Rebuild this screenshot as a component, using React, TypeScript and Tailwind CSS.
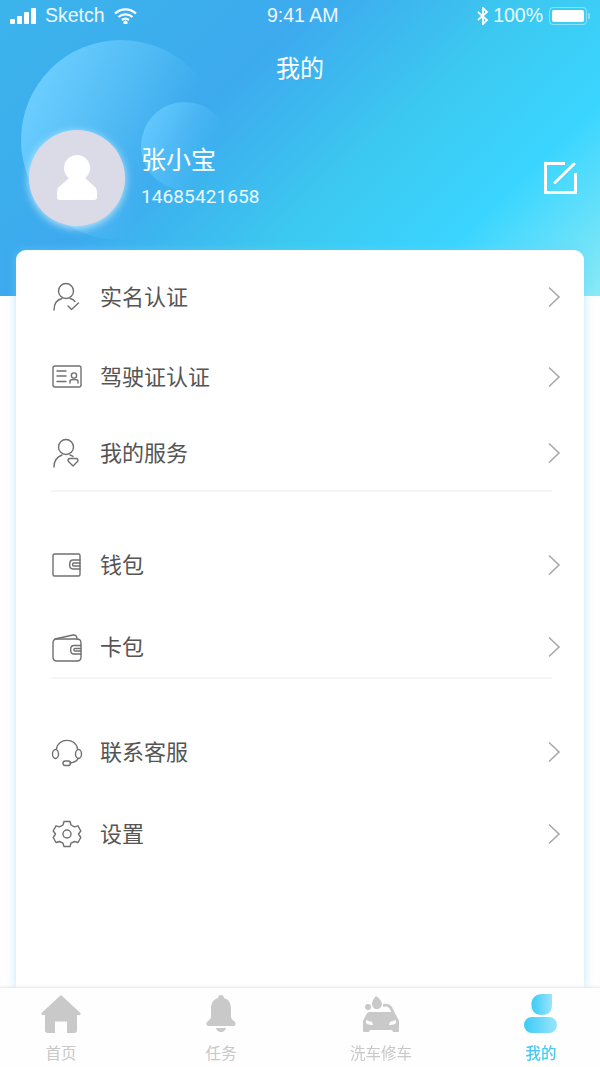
import React from 'react';

const Chevron = () => (
  <svg width="14" height="22" viewBox="0 0 14 22" fill="none" stroke="#a9a9a9" strokeWidth="1.6">
    <path d="M2 1.5 L12 11 L2 20.5" />
  </svg>
);

const iconProps = {
  width: 32,
  height: 32,
  viewBox: '0 0 32 32',
  fill: 'none',
  stroke: '#707070',
  strokeWidth: 1.4,
  strokeLinecap: 'round' as const,
  strokeLinejoin: 'round' as const,
};

const IdentityIcon = () => (
  <svg {...iconProps}>
    <circle cx="15" cy="10" r="7.500" />
    <path d="M3 29 C3 22 7 18.500 11 17.500" />
    <path d="M19 17.500 C21 18 23 19 24 20.500" />
    <path d="M17 25 L20.500 28.500 L27.500 22" />
  </svg>
);

const LicenseIcon = () => (
  <svg {...iconProps}>
    <rect x="2" y="5" width="28" height="21" rx="2" />
    <path d="M6 10 H15 M6 15 H15 M6 20.500 H15" />
    <circle cx="23" cy="14.500" r="2.600" />
    <path d="M19 22 V20 C19 18 27 18 27 20 V22" />
  </svg>
);

const ServiceIcon = () => (
  <svg {...iconProps}>
    <circle cx="15" cy="10" r="7.500" />
    <path d="M3 30 C3 23 7 19.500 11 18" />
    <path d="M19 18 C20 18.400 21 19 22 19.500" />
    <path d="M22 29 L17.500 24.500 C16.500 23 17 21.500 19 21.500 H25 C27 21.500 27.500 23 26.500 24.500 Z" />
  </svg>
);

const WalletIcon = () => (
  <svg {...iconProps}>
    <rect x="2" y="5" width="27" height="22" rx="1.500" />
    <path d="M29 11 H22 C17.500 11 17.500 20 22 20 H29" />
    <path d="M29 14 H23 C21 14 21 17 23 17 H29" />
  </svg>
);

const CardIcon = () => (
  <svg {...iconProps}>
    <path d="M2 12 C2 9.500 3.500 8 6 8 H26 C28.500 8 30 9.500 30 12 V26 C30 28.500 28.500 30 26 30 H6 C3.500 30 2 28.500 2 26 Z" />
    <path d="M4 8 L22 4 C24.500 3.600 26 5 26 8" />
    <path d="M30 14.500 H23 C18.500 14.500 18.500 23 23 23 H30" />
    <path d="M30 17.500 H24 C22.500 17.500 22.500 20 24 20 H30" />
  </svg>
);

const SupportIcon = () => (
  <svg {...iconProps}>
    <path d="M5.500 13 C7 1.500 25 1.500 26.500 13" />
    <ellipse cx="4.500" cy="18" rx="3" ry="4.500" />
    <ellipse cx="27.500" cy="18" rx="3" ry="4.500" />
    <path d="M27 22.500 C26 25.500 23 26.500 19 27" />
    <rect x="12" y="25" width="7.500" height="4.500" rx="2.200" />
  </svg>
);

const SettingsIcon = () => (
  <svg {...iconProps}>
    <path d="M13 3.500 H19 L20 7 L23.500 8.800 L27 7.800 L29.800 13 L27.500 16 L29.800 19.500 L27 24.500 L23.500 23.500 L20 25.200 L19 28.500 H13 L12 25.200 L8.500 23.500 L5 24.500 L2.200 19.500 L4.500 16 L2.200 13 L5 7.800 L8.500 8.800 L12 7 Z" />
    <circle cx="16" cy="16" r="4" />
  </svg>
);

const MenuRow = ({ icon, label, className }: { icon: React.ReactNode; label: string; className?: string }) => (
  <div className={`flex h-[60px] items-center pl-[35px] pr-[23px] ${className ?? ''}`}>
    <div className="flex w-[49px] shrink-0">{icon}</div>
    <span className="flex-1 pb-[4px] text-[22px] leading-none text-[#555555]">{label}</span>
    <Chevron />
  </div>
);

const Divider = () => <div className="ml-[35px] mr-[32px] h-[2px] bg-[#f4f5f6]" />;

const HomeIcon = () => (
  <svg width="40" height="40" viewBox="0 0 40 40" fill="#c9c9c9">
    <path d="M20 1 L39.500 19 C40 20.500 39 21 38 21 H36 V36.500 C36 38 35 39 33.500 39 H26 V27.500 H14 V39 H6.500 C5 39 4 38 4 36.500 V21 H2 C1 21 0 20.500 0.500 19 Z" />
  </svg>
);

const BellIcon = () => (
  <svg width="30" height="38" viewBox="0 0 30 38" fill="#c9c9c9">
    <path d="M15 0 C17 0 18 1.500 18 3 C23 4.500 25 8.500 25 14 V22 C25 24 27 25 29 27 C30.500 29 29 31 27 31 H3 C1 31 -0.500 29 1 27 C3 25 5 24 5 22 V14 C5 8.500 7 4.500 12 3 C12 1.500 13 0 15 0 Z" />
    <path d="M10 33 H20 C19 38.500 11 38.500 10 33 Z" />
  </svg>
);

const CarIcon = () => (
  <svg width="38" height="38" viewBox="0 0 38 38" fill="#c9c9c9">
    <path d="M14 1 C17 3 20 6 20 9 C20 12 17 14 15 14 C12 14 10 12 10 9 C10 6 12 3 14 1 Z" />
    <circle cx="6" cy="12" r="3" />
    <path d="M21 9 C25 8 28 9 30 12 L33 18 H30 L27 13 C26 11.500 24 11 21 12 Z" />
    <path fillRule="evenodd" d="M8 17 H30 C32 17 33 18 34 20 L36 24 C37 25 37 26 37 28 V36 C37 37 36 37 35 37 H32 C31 37 30.500 36.500 30 35 H8 C7.500 36.500 7 37 6 37 H3 C2 37 1 37 1 36 V28 C1 26 1 25 2 24 L4 20 C5 18 6 17 8 17 Z M4 25 V28 C6 30 9 30 11 30 L10 27 Z M34 25 V28 C32 30 29 30 27 30 L28 27 Z" />
  </svg>
);

const MineIcon = () => (
  <svg width="34" height="40" viewBox="0 0 34 40">
    <defs>
      <linearGradient id="mineGradient" x1="0" y1="0" x2="1" y2="0">
        <stop offset="0" stopColor="#3CCBF7" />
        <stop offset="1" stopColor="#98E5FB" />
      </linearGradient>
    </defs>
    <path d="M18 0 H28 V11 C28 18 24 21 18 21 C12 21 7.500 18 7.500 11 V10 C7.500 4 12 0 18 0 Z" fill="url(#mineGradient)" />
    <rect x="0" y="23" width="33" height="16" rx="8" fill="url(#mineGradient)" />
  </svg>
);

const TabItem = ({ icon, label, active }: { icon: React.ReactNode; label: string; active?: boolean }) => (
  <div className="flex w-[160px] shrink-0 flex-col items-center">
    <div className="flex h-[40px] items-center justify-center">{icon}</div>
    <span className={`mt-[8px] text-[15.5px] leading-[20px] ${active ? 'font-medium text-[#4cc9f3]' : 'text-[#c8c8c8]'}`}>
      {label}
    </span>
  </div>
);

export default function App() {
  return (
    <div className="h-[1067px] w-[600px] overflow-hidden bg-white">
      <div className="relative h-full w-full bg-white font-['Noto_Sans_CJK_SC','Noto_Sans',sans-serif] blur-[0.5px]">
        {/* header background */}
        <div className="absolute inset-x-0 top-0 h-[296px] overflow-hidden bg-[linear-gradient(136deg,#3bb4eb_0%,#3daaee_35%,#3cc8f0_58%,#3ad5ff_78%,#8aeaf6_100%)]">
          <div className="absolute left-[21px] top-[40px] h-[200px] w-[200px] rounded-full bg-[linear-gradient(115deg,#6ccdff_12%,rgba(62,174,238,0)_68%)]" />
          <div className="absolute left-[141px] top-[102px] h-[88px] w-[88px] rounded-full bg-[linear-gradient(115deg,#62c8fd_10%,rgba(62,174,238,0)_70%)]" />
        </div>

        <div className="relative flex h-full flex-col">
          {/* status bar */}
          <div className="flex h-[31px] items-center justify-between pl-[10px] pr-[10px] font-['Liberation_Sans',sans-serif] text-[19.5px] leading-none text-white/90">
            <div className="flex items-center">
              <div className="flex items-end gap-[2px]">
                <div className="h-[5px] w-[5px] rounded-[1px] bg-white" />
                <div className="h-[8px] w-[5px] rounded-[1px] bg-white" />
                <div className="h-[12px] w-[5px] rounded-[1px] bg-white" />
                <div className="h-[16px] w-[5px] rounded-[1px] bg-white" />
              </div>
              <span className="ml-[9px]">Sketch</span>
              <svg className="ml-[9px]" width="23" height="16" viewBox="0 0 23 16" fill="none" stroke="#fff" strokeWidth="2.200">
                <path d="M1 5.500 C7 0 16 0 22 5.500" />
                <path d="M4.500 9 C8.500 5.500 14.500 5.500 18.500 9" />
                <path d="M8 12 C10 10.500 13 10.500 15 12" />
                <circle cx="11.500" cy="14.500" r="1" fill="#fff" />
              </svg>
            </div>
            <span className="absolute left-[267px]">9:41 AM</span>
            <div className="flex items-center">
              <svg width="12" height="18" viewBox="0 0 12 18" fill="none" stroke="#fff" strokeWidth="1.800">
                <path d="M1 5 L10 13 L6 17 V1 L10 5 L1 13" />
              </svg>
              <span className="ml-[4px]">100%</span>
              <div className="ml-[6px] flex h-[18px] w-[38px] items-center rounded-[4px] border border-white/40 p-[2px]">
                <div className="h-full w-full rounded-[2px] bg-white" />
              </div>
              <div className="ml-[1px] h-[6px] w-[2px] rounded-r-[1px] bg-white/40" />
            </div>
          </div>

          {/* title */}
          <div className="mt-[18px] text-center text-[24px] leading-[36px] text-white">我的</div>

          {/* profile */}
          <div className="mt-[45px] flex h-[96px] items-center pl-[29px] pr-[23px]">
            <div className="flex h-[96px] w-[96px] shrink-0 flex-col items-center rounded-full bg-[#dbdbe8] shadow-[0_2px_8px_rgba(255,255,255,0.7)]">
              <svg className="mt-[25px]" width="40" height="46" viewBox="0 0 40 46" fill="#fff">
                <ellipse cx="20" cy="13" rx="13" ry="13" />
                <path d="M13 22 H27 L38 32 C40 34 40 36 40 42 C40 44 39 45 37 45 H3 C1 45 0 44 0 42 C0 36 0 34 2 32 Z" />
              </svg>
            </div>
            <div className="ml-[16px] flex-1 pb-[6px] text-white">
              <div className="text-[25px] leading-[34px]">张小宝</div>
              <div className="mt-[10px] font-['Roboto',sans-serif] text-[19px] leading-[24px] tracking-[0.1px] text-white/90">14685421658</div>
            </div>
            <svg width="33" height="32" viewBox="0 0 33 32" fill="none" stroke="#fff" strokeWidth="3">
              <path d="M21 1.500 H1.500 V30.500 H31.500 V11" />
              <path d="M11 20.500 L30 2" strokeLinecap="round" />
            </svg>
          </div>

          {/* card */}
          <div className="mx-[16px] mt-[24px] flex-1 rounded-t-[10px] bg-white shadow-[0_0_10px_rgba(110,210,250,0.5)]">
            <div className="pt-[17px]">
              <MenuRow icon={<IdentityIcon />} label="实名认证" />
              <MenuRow className="mt-[20px]" icon={<LicenseIcon />} label="驾驶证认证" />
              <MenuRow className="mt-[16px]" icon={<ServiceIcon />} label="我的服务" />
            </div>
            <div className="mt-[7px]">
              <Divider />
            </div>
            <div className="pt-[43px]">
              <MenuRow icon={<WalletIcon />} label="钱包" />
              <MenuRow className="mt-[22px]" icon={<CardIcon />} label="卡包" />
            </div>
            <Divider />
            <div className="pt-[43px]">
              <MenuRow icon={<SupportIcon />} label="联系客服" />
              <MenuRow className="mt-[22px]" icon={<SettingsIcon />} label="设置" />
            </div>
          </div>

          {/* tab bar */}
          <div className="relative flex h-[79px] justify-center bg-[#fefefe] pl-[2px] pt-[6px] shadow-[0_-1px_3px_rgba(0,0,0,0.1)]">
            <TabItem icon={<HomeIcon />} label="首页" />
            <TabItem icon={<BellIcon />} label="任务" />
            <TabItem icon={<CarIcon />} label="洗车修车" />
            <TabItem icon={<MineIcon />} label="我的" active />
          </div>
        </div>
      </div>
    </div>
  );
}
